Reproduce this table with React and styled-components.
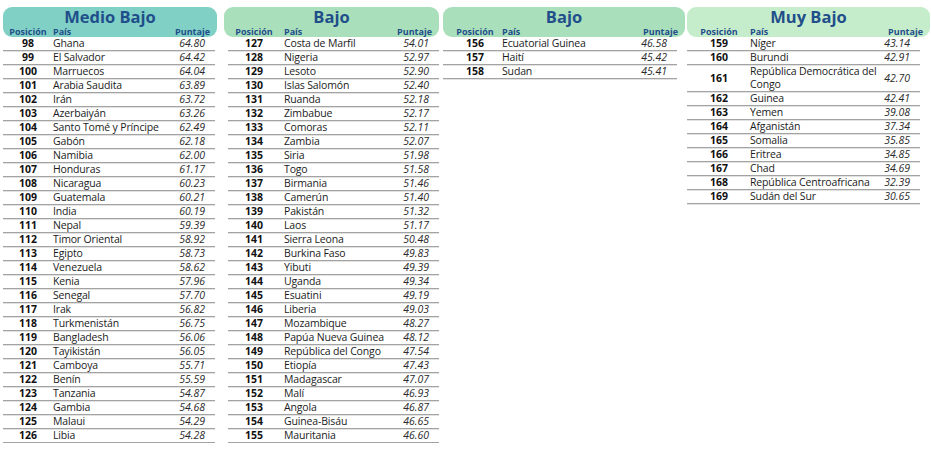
import React from "react";
import styled, { createGlobalStyle } from "styled-components";

const GlobalStyle = createGlobalStyle`
  body {
    margin: 0;
    background: #ffffff;
    font-family: "Open Sans", "Noto Sans", sans-serif;
  }
`;

const medioBajo = [
  [98, "Ghana", "64.80"],
  [99, "El Salvador", "64.42"],
  [100, "Marruecos", "64.04"],
  [101, "Arabia Saudita", "63.89"],
  [102, "Irán", "63.72"],
  [103, "Azerbaiyán", "63.26"],
  [104, "Santo Tomé y Príncipe", "62.49"],
  [105, "Gabón", "62.18"],
  [106, "Namibia", "62.00"],
  [107, "Honduras", "61.17"],
  [108, "Nicaragua", "60.23"],
  [109, "Guatemala", "60.21"],
  [110, "India", "60.19"],
  [111, "Nepal", "59.39"],
  [112, "Timor Oriental", "58.92"],
  [113, "Egipto", "58.73"],
  [114, "Venezuela", "58.62"],
  [115, "Kenia", "57.96"],
  [116, "Senegal", "57.70"],
  [117, "Irak", "56.82"],
  [118, "Turkmenistán", "56.75"],
  [119, "Bangladesh", "56.06"],
  [120, "Tayikistán", "56.05"],
  [121, "Camboya", "55.71"],
  [122, "Benín", "55.59"],
  [123, "Tanzania", "54.87"],
  [124, "Gambia", "54.68"],
  [125, "Malaui", "54.29"],
  [126, "Libia", "54.28"],
];

const bajo = [
  [127, "Costa de Marfil", "54.01"],
  [128, "Nigeria", "52.97"],
  [129, "Lesoto", "52.90"],
  [130, "Islas Salomón", "52.40"],
  [131, "Ruanda", "52.18"],
  [132, "Zimbabue", "52.17"],
  [133, "Comoras", "52.11"],
  [134, "Zambia", "52.07"],
  [135, "Siria", "51.98"],
  [136, "Togo", "51.58"],
  [137, "Birmania", "51.46"],
  [138, "Camerún", "51.40"],
  [139, "Pakistán", "51.32"],
  [140, "Laos", "51.17"],
  [141, "Sierra Leona", "50.48"],
  [142, "Burkina Faso", "49.83"],
  [143, "Yibuti", "49.39"],
  [144, "Uganda", "49.34"],
  [145, "Esuatini", "49.19"],
  [146, "Liberia", "49.03"],
  [147, "Mozambique", "48.27"],
  [148, "Papúa Nueva Guinea", "48.12"],
  [149, "República del Congo", "47.54"],
  [150, "Etiopía", "47.43"],
  [151, "Madagascar", "47.07"],
  [152, "Malí", "46.93"],
  [153, "Angola", "46.87"],
  [154, "Guinea-Bisáu", "46.65"],
  [155, "Mauritania", "46.60"],
];

const bajoFin = [
  [156, "Ecuatorial Guinea", "46.58"],
  [157, "Haití", "45.42"],
  [158, "Sudan", "45.41"],
];

const muyBajo = [
  [159, "Níger", "43.14"],
  [160, "Burundi", "42.91"],
  [161, "República Democrática del Congo", "42.70"],
  [162, "Guinea", "42.41"],
  [163, "Yemen", "39.08"],
  [164, "Afganistán", "37.34"],
  [165, "Somalia", "35.85"],
  [166, "Eritrea", "34.85"],
  [167, "Chad", "34.69"],
  [168, "República Centroafricana", "32.39"],
  [169, "Sudán del Sur", "30.65"],
];

const panels = [
  { title: "Medio Bajo", bg: "#80d0c5", width: 214, gap: 0, posW: 46, posShift: 4, rowL: 0, rowR: 2, rows: medioBajo },
  { title: "Bajo", bg: "#a9e0bb", width: 215, gap: 7, posW: 52, posShift: 0, rowL: 4, rowR: 0, rows: bajo },
  { title: "Bajo", bg: "#a9e0bb", width: 242, gap: 4, posW: 55, posShift: 9, rowL: 0, rowR: 8, rows: bajoFin },
  { title: "Muy Bajo", bg: "#c6edcb", width: 243, gap: 2, posW: 59, posShift: 5, rowL: 0, rowR: 10, rows: muyBajo },
];

const Page = styled.div`
  display: flex;
  align-items: flex-start;
  padding: 7px 0 0 3px;
`;

const Panel = styled.section`
  width: ${(props) => props.width}px;
  margin-left: ${(props) => props.gap}px;
  flex-shrink: 0;
`;

const Header = styled.header`
  background: ${(props) => props.bg};
  border-radius: 9px;
  height: 30px;
  box-sizing: border-box;
`;

const Title = styled.h2`
  margin: 0;
  text-align: center;
  font-size: 16.5px;
  line-height: 19px;
  font-weight: 700;
  color: #1f4e8a;
`;

const Grid = styled.div`
  display: grid;
  grid-template-columns: ${(props) => props.posW}px 1fr auto;
  column-gap: 4px;
  align-items: center;
`;

const Labels = styled(Grid)`
  font-size: 9px;
  line-height: 11px;
  font-weight: 700;
  color: #1f4e8a;
  padding: 0 7px 0 ${(props) => props.left}px;
`;

const PosCell = styled.span`
  text-align: center;
  padding-left: ${(props) => props.shift}px;
`;

const Rows = styled.div`
  margin: 0 ${(props) => props.right}px 0 ${(props) => props.left}px;
`;

const Row = styled(Grid)`
  font-size: 10.5px;
  line-height: 13px;
  color: #1b1b1b;
  border-bottom: 1px solid #a3a3a3;
  box-shadow: 0 1px 0 #e2e2e2;
  padding-right: 10px;
`;

const Num = styled.span`
  text-align: center;
  font-weight: 700;
  color: #111;
  padding-left: ${(props) => props.shift}px;
`;

const Country = styled.span`
  letter-spacing: -0.15px;
`;

const Score = styled.span`
  font-style: italic;
  color: #2a2a2a;
`;

export default function App() {
  return (
    <>
      <GlobalStyle />
      <Page>
        {panels.map((panel, i) => (
          <Panel key={i} width={panel.width} gap={panel.gap}>
            <Header bg={panel.bg}>
              <Title>{panel.title}</Title>
              <Labels posW={panel.posW} left={panel.rowL}>
                <PosCell shift={panel.posShift}>Posición</PosCell>
                <span>País</span>
                <span>Puntaje</span>
              </Labels>
            </Header>
            <Rows left={panel.rowL} right={panel.rowR}>
              {panel.rows.map(([pos, country, score]) => (
                <Row key={pos} posW={panel.posW}>
                  <Num shift={panel.posShift}>{pos}</Num>
                  <Country>{country}</Country>
                  <Score>{score}</Score>
                </Row>
              ))}
            </Rows>
          </Panel>
        ))}
      </Page>
    </>
  );
}
